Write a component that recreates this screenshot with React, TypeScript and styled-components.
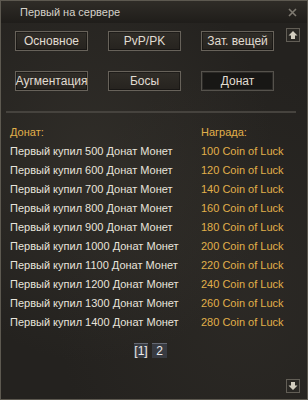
import React from 'react';
import styled, { createGlobalStyle } from 'styled-components';

const GlobalStyle = createGlobalStyle`
  html, body { margin: 0; padding: 0; background: #1c1a17; }
  * { box-sizing: border-box; }
`;

const Window = styled.div`
  width: 308px;
  height: 400px;
  display: flex;
  flex-direction: column;
  border: 1px solid #5d5950;
  background:
    radial-gradient(ellipse at 30% 40%, rgba(70, 66, 58, 0.35), transparent 60%),
    radial-gradient(ellipse at 80% 75%, rgba(60, 56, 50, 0.3), transparent 55%),
    #24221f;
  font-family: 'Liberation Sans', Arial, sans-serif;
  font-size: 11px;
  color: #e6e2da;
  overflow: hidden;
`;

const TitleBar = styled.div`
  height: 22px;
  flex: none;
  display: flex;
  align-items: center;
  justify-content: space-between;
  padding: 0 10px 0 19px;
  background: linear-gradient(#2f2c27, #1f1d1a);
  color: #d6d2ca;
`;

const CloseBtn = styled.svg`
  width: 9px;
  height: 9px;
`;

const Body = styled.div`
  flex: 1;
  display: flex;
  min-height: 0;
`;

const Main = styled.div`
  flex: 1;
  min-width: 0;
  display: flex;
  flex-direction: column;
  padding-left: 14px;
`;

const TabGrid = styled.div`
  margin-top: 8px;
  display: grid;
  grid-template-columns: repeat(3, 73px);
  grid-auto-rows: 20px;
  column-gap: 20px;
  row-gap: 20px;
`;

const Tab = styled.div<{ $active?: boolean }>`
  display: flex;
  align-items: center;
  justify-content: center;
  border: 1px solid ${p => (p.$active ? '#55524c' : '#67625a')};
  background: ${p => (p.$active ? '#181715' : 'linear-gradient(#302d28, #26231f)')};
  box-shadow: inset 0 0 0 1px ${p => (p.$active ? '#2c2a27' : 'rgba(0,0,0,0.35)')};
  color: #e0dcd2;
  font-size: 12px;
  white-space: nowrap;
`;

const Separator = styled.div`
  margin: 20px 0 0 -9px;
  width: 290px;
  height: 2px;
  background: #46433e;
`;

const Table = styled.div`
  margin: 9px 0 0 -5px;
  display: flex;
  flex-direction: column;
`;

const Row = styled.div`
  display: grid;
  grid-template-columns: 191px 1fr;
  height: 19px;
  align-items: center;
  white-space: nowrap;
`;

const Cell = styled.span<{ $gold?: boolean }>`
  color: ${p => (p.$gold ? '#e1b04a' : '#e8e4dc')};
`;

const Pager = styled.div`
  margin-top: 12px;
  display: flex;
  justify-content: center;
  gap: 4px;
`;

const Page = styled.div<{ $w: number }>`
  width: ${p => p.$w}px;
  height: 15px;
  display: flex;
  align-items: center;
  justify-content: center;
  background: #383b42;
  border-top: 1px solid #656973;
  color: #eeeeee;
  font-size: 12px;
`;

const ScrollCol = styled.div`
  width: 21px;
  flex: none;
  display: flex;
  flex-direction: column;
  justify-content: space-between;
  padding: 5px 7px 6px 0;
`;

const ArrowBox = styled.div`
  width: 14px;
  height: 14px;
  border: 1px solid #625e56;
  background: #2a2824;
  display: flex;
  align-items: center;
  justify-content: center;
`;

const Arrow = ({ down }: { down?: boolean }) => (
  <svg width="10" height="10" viewBox="0 0 10 10" style={down ? { transform: 'rotate(180deg)' } : undefined}>
    <path d="M5 1 L9.5 5.5 H7 V9 H3 V5.5 H0.5 Z" fill="#d2cdbf" />
  </svg>
);

const rows = [
  [500, 100], [600, 120], [700, 140], [800, 160], [900, 180],
  [1000, 200], [1100, 220], [1200, 240], [1300, 260], [1400, 280],
];

export default function App() {
  return (
    <Window>
      <GlobalStyle />
      <TitleBar>
        <span>Первый на сервере</span>
        <CloseBtn viewBox="0 0 9 9">
          <path d="M1 1 L8 8 M8 1 L1 8" stroke="#7e7a71" strokeWidth="1.6" />
        </CloseBtn>
      </TitleBar>
      <Body>
        <Main>
          <TabGrid>
            <Tab>Основное</Tab>
            <Tab>PvP/PK</Tab>
            <Tab>Зат. вещей</Tab>
            <Tab>Аугментация</Tab>
            <Tab>Босы</Tab>
            <Tab $active>Донат</Tab>
          </TabGrid>
          <Separator />
          <Table>
            <Row>
              <Cell $gold>Донат:</Cell>
              <Cell $gold>Награда:</Cell>
            </Row>
            {rows.map(([a, b]) => (
              <Row key={a}>
                <Cell>Первый купил {a} Донат Монет</Cell>
                <Cell $gold>{b} Coin of Luck</Cell>
              </Row>
            ))}
          </Table>
          <Pager>
            <Page $w={14}>[1]</Page>
            <Page $w={15}>2</Page>
          </Pager>
        </Main>
        <ScrollCol>
          <ArrowBox><Arrow /></ArrowBox>
          <ArrowBox><Arrow down /></ArrowBox>
        </ScrollCol>
      </Body>
    </Window>
  );
}
